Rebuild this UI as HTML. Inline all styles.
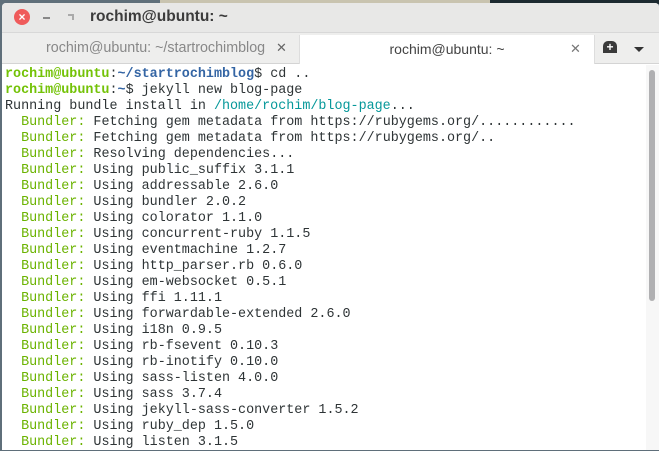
<!DOCTYPE html>
<html><head><meta charset="utf-8"><style>
*{margin:0;padding:0;box-sizing:border-box}
body{width:659px;height:451px;overflow:hidden;background:#5f6f7a;position:relative;font-family:"Liberation Sans",sans-serif}
.wp1{position:absolute;left:160px;top:0;width:330px;height:4px;background:#c9c4b0}
.wp2{position:absolute;left:490px;top:0;width:169px;height:4px;background:#1c2a30}
.win{position:absolute;left:2px;top:3px;width:657px;height:447px;background:#fff;border-radius:4px 4px 0 0;overflow:hidden}
.title{height:29px;background:#e8e8e7;position:relative}
.close{position:absolute;left:12px;top:6px;width:16px;height:16px;border-radius:50%;background:#ef5b5b;color:#fff;font-size:12px;line-height:16px;text-align:center;font-weight:bold}
.min{position:absolute;left:41px;top:14px;width:7px;height:2px;background:#888}
.max{position:absolute;left:66px;top:11px;width:6px;height:6px;border-top:2px solid #aaa;border-right:2px solid #aaa}
.ttext{position:absolute;left:88px;top:5px;font-size:15.5px;font-weight:bold;color:#3c3c3c}
.tabs{height:32px;background:#eeeeed;border-top:1px solid #d8d8d8;border-bottom:1px solid #d4d4d4;position:relative}
.tab1{position:absolute;left:0;top:0;width:296px;height:31px;font-size:14.3px;color:#888;padding-left:44px;line-height:30px}
.tab1 .x{position:absolute;left:274px;color:#666;font-size:13px}
.tab2{position:absolute;left:297px;top:2px;width:296px;height:29px;background:#fff;border-left:1px solid #ddd;border-right:1px solid #ddd;font-size:14px;color:#444;text-align:center;line-height:28px}
.tab2 .x{position:absolute;left:270px;top:0;color:#777;font-size:13px}
.newt{position:absolute;left:601px;top:8px;width:14px;height:12px;background:#3a3a3a;border-radius:5px 5px 0 0;color:#fff;font-size:12px;line-height:12px;text-align:center;font-weight:bold}
.drop{position:absolute;left:632px;top:14px;width:0;height:0;border-left:5px solid transparent;border-right:5px solid transparent;border-top:5px solid #333}
.term{position:absolute;left:3px;top:64px;font-family:"Liberation Mono",monospace;font-size:13.4px;line-height:16px;color:#2e3436;white-space:pre}
.g{color:#73c206;font-weight:bold}.b{color:#3465a4;font-weight:bold}.c{color:#06989a}.y{color:#6bb300}
.trough{position:absolute;left:644px;top:62px;width:13px;height:385px;background:#f7f7f7}
.thumb{position:absolute;left:647px;top:67px;width:6px;height:231px;background:#b0b0b2;border-radius:3px}
</style></head><body>
<div class="wp1"></div><div class="wp2"></div>
<div class="win">
<div class="title"><div class="close">×</div><div class="min"></div><div class="max"></div><div class="ttext">rochim@ubuntu: ~</div></div>
<div class="tabs">
<div class="tab1">rochim@ubuntu: ~/startrochimblog<span class="x">✕</span></div>
<div class="tab2">rochim@ubuntu: ~<span class="x">✕</span></div>
<div class="newt">+</div><div class="drop"></div>
</div>
<div class="trough"></div><div class="thumb"></div>
<div class="term"><span class="g">rochim@ubuntu</span>:<span class="b">~/startrochimblog</span>$ cd ..
<span class="g">rochim@ubuntu</span>:<span class="b">~</span>$ jekyll new blog-page
Running bundle install in <span class="c">/home/rochim/blog-page</span>...
  <span class="y">Bundler:</span> Fetching gem metadata from https://rubygems.org/............
  <span class="y">Bundler:</span> Fetching gem metadata from https://rubygems.org/..
  <span class="y">Bundler:</span> Resolving dependencies...
  <span class="y">Bundler:</span> Using public_suffix 3.1.1
  <span class="y">Bundler:</span> Using addressable 2.6.0
  <span class="y">Bundler:</span> Using bundler 2.0.2
  <span class="y">Bundler:</span> Using colorator 1.1.0
  <span class="y">Bundler:</span> Using concurrent-ruby 1.1.5
  <span class="y">Bundler:</span> Using eventmachine 1.2.7
  <span class="y">Bundler:</span> Using http_parser.rb 0.6.0
  <span class="y">Bundler:</span> Using em-websocket 0.5.1
  <span class="y">Bundler:</span> Using ffi 1.11.1
  <span class="y">Bundler:</span> Using forwardable-extended 2.6.0
  <span class="y">Bundler:</span> Using i18n 0.9.5
  <span class="y">Bundler:</span> Using rb-fsevent 0.10.3
  <span class="y">Bundler:</span> Using rb-inotify 0.10.0
  <span class="y">Bundler:</span> Using sass-listen 4.0.0
  <span class="y">Bundler:</span> Using sass 3.7.4
  <span class="y">Bundler:</span> Using jekyll-sass-converter 1.5.2
  <span class="y">Bundler:</span> Using ruby_dep 1.5.0
  <span class="y">Bundler:</span> Using listen 3.1.5</div>
</div>
</body></html>
